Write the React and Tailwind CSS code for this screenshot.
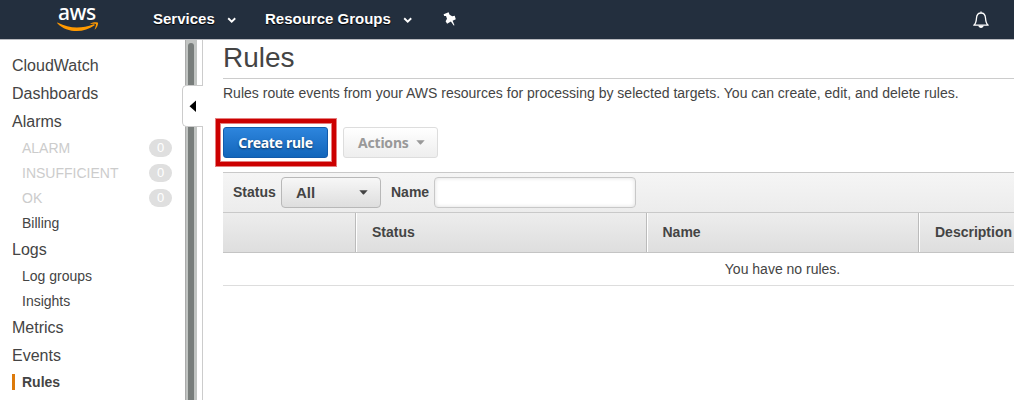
import React from 'react';

const Chevron = () => (
  <svg width="10" height="8" viewBox="0 0 10 8" fill="none" className="relative top-px shrink-0">
    <path d="M1.2 2.2 L4.7 5.6 L8.2 2.2" stroke="#fff" strokeWidth="1.9" />
  </svg>
);

const Caret = ({ className }) => (
  <svg width="9" height="5" viewBox="0 0 9 5" className={className}>
    <path d="M0.3 0.2 H8.7 L4.9 4.6 H4.1 Z" fill="currentColor" />
  </svg>
);

function TopBar() {
  return (
    <header className="flex h-10 w-full shrink-0 items-start border-b border-[#b9bbc0] bg-[#232f3e] text-[15px] font-bold leading-[18px] text-white [text-shadow:0_1px_1px_#000]">
      <div className="ml-[57px] w-[96px]">
        <div className="h-[22px] pl-[1px] font-['Noto_Sans',sans-serif] text-[21px] font-medium leading-[24px] tracking-[-0.5px] [text-shadow:none]">aws</div>
        <svg width="42" height="11" viewBox="0 0 42 11" className="block">
          <path d="M0.3 1.2 C0 0.7 0.4 0.4 1 0.8 C12 6.6 24 7.2 36.6 2.3 C37.6 1.9 38.2 2.9 37.3 3.6 C27 11.2 10 11.4 0.3 1.2Z" fill="#f90" />
          <path d="M33.5 1.6 C35.8 -0.2 40.3 -0.1 40.9 0.6 C41.5 1.4 40.5 5.4 38.2 7.3 C37.8 7.6 37.5 7.4 37.7 7 C38.4 5.4 39.3 2.7 38.8 2.1 C38.3 1.5 35.5 1.9 34 2.1 C33.5 2.1 33.2 1.9 33.5 1.6Z" fill="#f90" />
        </svg>
      </div>
      <div className="flex w-[112px] items-center pt-[10px]">
        <span className="w-[74px] whitespace-nowrap">Services</span><Chevron />
      </div>
      <div className="flex w-[178px] items-center pt-[10px]">
        <span className="w-[138px] whitespace-nowrap">Resource Groups</span><Chevron />
      </div>
      <svg width="14" height="15" viewBox="0 0 14 15" className="mt-[12px]">
        <path d="M0.6 2.2 L5.6 0.3 L6.6 2.7 L9.2 4.2 L11.7 3.8 L12.8 7.3 L9.6 8.8 L11.5 13.2 L10.7 13.4 L7.9 9.5 L4.1 11.8 L2.6 9.2 L4 6.7 L3 3.9 L1.2 4Z" fill="#fff" />
      </svg>
      <svg width="18" height="18" viewBox="0 0 18 18" fill="none" className="ml-auto mr-[24px] mt-[11px]">
        <path d="M9 0.5 V2 M1.8 14.2 C4.2 12.3 4.3 10.5 4.5 7 C4.7 3.9 6.3 2 9 2 C11.7 2 13.3 3.9 13.5 7 C13.7 10.5 13.8 12.3 16.2 14.2 Z" stroke="#fff" strokeWidth="1.3" strokeLinejoin="round" />
        <path d="M6.3 14.5 H11.7 C11.5 17.8 6.5 17.8 6.3 14.5Z" fill="#fff" />
      </svg>
    </header>
  );
}

const Main = ({ children }) => <a className="block h-7 pl-3 text-[16px] leading-7">{children}</a>;
const Sub = ({ children }) => <a className="block h-[25px] pl-[22px] text-[14px] leading-[25px]">{children}</a>;
const Alarm = ({ children }) => (
  <a className="flex h-[25px] items-center justify-between pl-[22px] pr-[13px] text-[14px] text-[#ccc]">
    <span>{children}</span>
    <span className="relative -top-px h-[18px] w-[23px] rounded-[9px] bg-[#dfdfdf] text-center text-[13px] leading-[18px] text-white">0</span>
  </a>
);

function Sidebar() {
  return (
    <aside className="relative flex w-[203px] shrink-0 border-r border-[#ccc]">
      <nav className="w-[185px] pt-[12px]">
        <Main>CloudWatch</Main>
        <Main>Dashboards</Main>
        <Main>Alarms</Main>
        <Alarm>ALARM</Alarm>
        <Alarm>INSUFFICIENT</Alarm>
        <Alarm>OK</Alarm>
        <Sub>Billing</Sub>
        <Main>Logs</Main>
        <Sub>Log groups</Sub>
        <Sub>Insights</Sub>
        <Main>Metrics</Main>
        <Main>Events</Main>
        <a className="ml-3 mt-[4px] block h-4 border-l-[3px] border-[#dd7a0b] pl-[7px] text-[14px] font-bold leading-4">Rules</a>
      </nav>
      <div className="flex w-3 justify-center border-l border-[#aaa] bg-[#c1c4c2] pr-px pt-[3px]">
        <div className="w-[6px] rounded-t-[3px] bg-[#787d7b]" />
      </div>
      <button className="absolute -right-px top-[45px] flex h-[42px] w-[21px] items-center rounded-l-[5px] border border-r-0 border-[#ccc] bg-white pl-[6px]">
        <svg width="8" height="12" viewBox="0 0 8 12"><path d="M7 0.5 V12 L0.5 6.2Z" fill="#000" /></svg>
      </button>
    </aside>
  );
}

export default function App() {
  return (
    <div className="flex h-[400px] w-[1014px] flex-col overflow-hidden bg-white font-['Liberation_Sans',Arial,sans-serif] text-[#444]">
      <TopBar />
      <div className="flex min-h-0 flex-1">
        <Sidebar />
        <main className="min-w-0 flex-1 pl-5">
          <h1 className="h-[39px] border-b border-[#ccc] text-[28px] leading-[35px]">Rules</h1>
          <p className="mt-[6px] whitespace-nowrap text-[14px] leading-4 tracking-[0.006px]">Rules route events from your AWS resources for processing by selected targets. You can create, edit, and delete rules.</p>
          <div className="mt-[26px] flex h-[31px] gap-[15px] font-['Noto_Sans',sans-serif] text-[14px] font-bold">
            <div className="relative w-[105px]">
              <button className="h-[31px] w-[105px] whitespace-nowrap rounded-[3px] border border-[#125bab] bg-linear-to-b from-[#2d85dd] to-[#1166bb] leading-[29px] tracking-[-0.3px] text-white [text-shadow:0_1px_2px_#0008]">Create rule</button>
              <div className="pointer-events-none absolute -left-[7px] -top-[8px] h-[47px] w-[120px] border-4 border-[#c00] shadow-[0_0_0_1px_#cc000080,inset_0_0_0_1px_#cc000080]" />
            </div>
            <button className="flex w-[95px] items-center rounded-[3px] border border-[#ddd] bg-linear-to-b from-white to-[#eee] pl-[14px] text-[#999]">
              <span className="w-[58px] text-left tracking-[-0.2px]">Actions</span><Caret />
            </button>
          </div>
          <div className="mt-[14px] flex h-[41px] items-center border-y border-[#c9c9c9] bg-linear-to-b from-[#f5f5f5] to-[#ececec] pl-[10px] text-[14px] font-bold">
            <span className="w-[48px]">Status</span>
            <button className="flex h-[31px] w-[100px] items-center justify-between rounded-[4px] border border-[#b8b8b8] bg-linear-to-b from-[#f7f7f7] to-[#dedede] pl-[14px] pr-[12px] text-[15px]">
              <span className="relative top-px">All</span><Caret />
            </button>
            <span className="ml-[10px] w-[43px]">Name</span>
            <input className="h-[31px] w-[202px] rounded-[4px] border border-[#c8c8c8] bg-white shadow-[inset_0_0_4px_#ddd] outline-none" />
          </div>
          <div className="flex h-[40px] border-b border-[#c4c4c4] bg-linear-to-b from-[#ededed] to-[#dedede] text-[14px] font-bold leading-[38px]">
            <div className="w-[133px] border-r border-[#bbb]" />
            <div className="w-[291px] border-l border-r border-l-white border-r-[#bbb] pl-[15px]">Status</div>
            <div className="w-[272px] border-l border-r border-l-white border-r-[#bbb] pl-[14.5px]">Name</div>
            <div className="flex-1 border-l border-white pl-[15px]">Description</div>
          </div>
          <div className="h-[33px] border-b border-[#ddd] pl-[501.8px] text-[14px] leading-8">You have no rules.</div>
        </main>
      </div>
    </div>
  );
}
